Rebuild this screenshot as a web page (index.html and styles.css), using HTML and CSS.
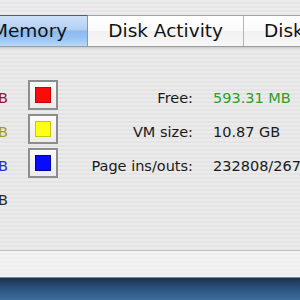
FILE: index.html
```html
<!DOCTYPE html>
<html>
<head>
<meta charset="utf-8">
<link rel="stylesheet" href="styles.css">
</head>
<body>
<div class="window">
  <div class="topbar"></div>
  <div class="tabs">
    <div class="tab selected">Memory</div>
    <div class="tab">Disk Activity</div>
    <div class="tab">Disk Usage</div>
  </div>
  <div class="panel">
    <div class="grid">
      <div class="amt wired"><span>MB</span></div>
      <div class="well"><span class="chip red"></span></div>
      <div class="label">Free:</div>
      <div class="value free">593.31 MB</div>

      <div class="amt active"><span>MB</span></div>
      <div class="well"><span class="chip yellow"></span></div>
      <div class="label">VM size:</div>
      <div class="value">10.87 GB</div>

      <div class="amt inactive"><span>MB</span></div>
      <div class="well"><span class="chip blue"></span></div>
      <div class="label">Page ins/outs:</div>
      <div class="value">232808/26741</div>

      <div class="amt used"><span>GB</span></div>
      <div></div>
      <div></div>
      <div></div>
    </div>
  </div>
  <div class="footer"></div>
</div>
<div class="desktop"></div>
</body>
</html>
```
FILE: styles.css
```css
html, body {
  margin: 0;
  padding: 0;
}
body {
  width: 300px;
  height: 300px;
  overflow: hidden;
  font-family: "DejaVu Sans", "Liberation Sans", sans-serif;
  color: #1a1a1a;
  background: #e8e8e8;
}
.window {
  display: flex;
  flex-direction: column;
}
.topbar {
  height: 15px;
  background: repeating-linear-gradient(to bottom, #ececec 0 2px, #e6e6e6 2px 4px);
}
.tabs {
  display: flex;
  height: 30px;
  border-top: 1px solid #a4a4a4;
  border-bottom: 1px solid #9c9c9c;
  margin-left: -28px;
  white-space: nowrap;
  background: linear-gradient(to bottom, #ffffff 0%, #fbfbfb 50%, #f1f1f1 51%, #f7f7f7 100%);
}
.tab {
  flex: none;
  padding: 0 20px;
  font-size: 18.5px;
  line-height: 30px;
  border-right: 1px solid #b4b4b4;
  color: #111;
}
.tab.selected {
  margin-top: -1px;
  border-top: 1px solid #3b5fa6;
  border-right-color: #7f98c0;
  background: linear-gradient(to bottom, #cde0f8 0%, #b2d0f4 45%, #8cbaf0 50%, #98c3f3 75%, #b8d9fb 100%);
}
.panel {
  height: 203px;
  box-sizing: border-box;
  padding-top: 31px;
  background: repeating-linear-gradient(to bottom, #ebebeb 0 2px, #e4e4e4 2px 4px);
  box-shadow: inset 0 1px 0 #cfcfcf, inset 0 2px 0 #dcdcdc;
}
.grid {
  display: grid;
  grid-template-columns: 28px 30px 135px auto;
  grid-auto-rows: 34px;
  font-size: 14.5px;
  white-space: nowrap;
}
.amt, .label, .value {
  line-height: 28px;
  padding-top: 6px;
}
.amt {
  display: flex;
  justify-content: flex-end;
  width: 8px;
}
.wired { color: #961436; }
.active { color: #a39c16; }
.inactive { color: #2a2ec8; }
.used { color: #2a2a2a; }
.well {
  align-self: center;
  width: 30px;
  height: 30px;
  box-sizing: border-box;
  border: 2px solid #8d8d8d;
  background: linear-gradient(to bottom, #fbfbfb, #ececec);
  display: flex;
  align-items: center;
  justify-content: center;
}
.chip {
  width: 16px;
  height: 16px;
  box-sizing: border-box;
  border: 1px solid;
}
.chip.red { background: #ff0a0a; border-color: #c80000; }
.chip.yellow { background: #ffff14; border-color: #c8c800; }
.chip.blue { background: #0a0aff; border-color: #0000a8; }
.label {
  text-align: right;
}
.value {
  padding-left: 20px;
}
.value.free {
  color: #2e9e26;
}
.footer {
  height: 26px;
  border-top: 1px solid #bdbdbd;
  border-bottom: 1px solid #7b8896;
  background: repeating-linear-gradient(to bottom, #f3f3f3 0 2px, #eeeeee 2px 4px);
}
.desktop {
  height: 22px;
  background: linear-gradient(to bottom, #1a3250, #2c547e 50%, #3d6d9e);
}
```
